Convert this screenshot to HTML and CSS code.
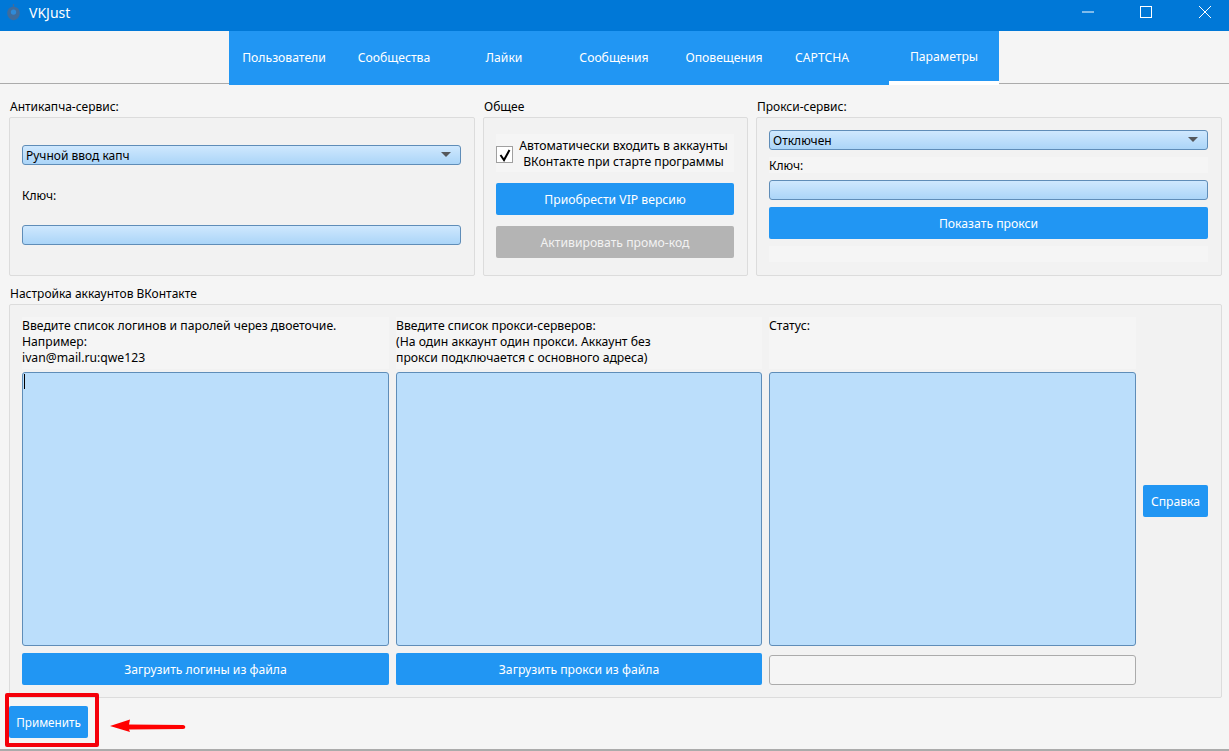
FILE: index.html
```html
<!DOCTYPE html>
<html lang="ru">
<head>
    <meta charset="UTF-8">
    <title>VKJust</title>
    <link rel="stylesheet" href="styles.css">
</head>
<body>
<div class="window">
    <div class="titlebar">
        <div class="app">
            <svg class="app-icon" width="15" height="18" viewBox="0 0 16 20">
                <path d="M8 0v3M3 5l2 1M13 5l-2 1" stroke="#3f6c9c" stroke-width="1.5"/>
                <path d="M8 3c4 0 7 3 7 7s-3 8-7 8-7-4-7-8 3-7 7-7z" fill="#3f6c9c"/>
                <circle cx="8" cy="9" r="3" fill="#2f8ad8"/>
            </svg>
            <span>VKJust</span>
        </div>
        <div class="win-btns">
            <svg class="win-min" width="14" height="14" viewBox="0 0 14 14"><path d="M1 7h12" stroke="#fff" fill="none"/></svg>
            <svg width="14" height="14" viewBox="0 0 14 14"><rect x="1.500" y="1.500" width="11" height="11" stroke="#fff" fill="none"/></svg>
            <svg width="14" height="14" viewBox="0 0 14 14"><path d="M1 1l12 12M13 1L1 13" stroke="#fff" fill="none"/></svg>
        </div>
    </div>

    <div class="tabbar">
        <ul class="tabs">
            <li>Пользователи</li>
            <li>Сообщества</li>
            <li>Лайки</li>
            <li>Сообщения</li>
            <li>Оповещения</li>
            <li class="shift">CAPTCHA</li>
            <li class="active">Параметры</li>
        </ul>
    </div>

    <div class="content">
        <div class="top-row">
            <section class="col col-a">
                <h3>Антикапча-сервис:</h3>
                <div class="group group-a">
                    <div class="select"><span>Ручной ввод капч</span><i class="arrow"></i></div>
                    <div class="lbl">Ключ:</div>
                    <div class="field"></div>
                </div>
            </section>
            <section class="col col-b">
                <h3>Общее</h3>
                <div class="group group-b">
                    <div class="check-row">
                        <div class="check">
                            <svg width="15" height="15" viewBox="0 0 15 15"><path d="M3.500 8l3.500 5 5.500-10" stroke="#000" stroke-width="2" fill="none"/></svg>
                        </div>
                        <div class="check-text">Автоматически входить в аккаунты<br>ВКонтакте при старте программы</div>
                    </div>
                    <div class="btn">Приобрести VIP версию</div>
                    <div class="btn btn-off">Активировать промо-код</div>
                </div>
            </section>
            <section class="col col-c">
                <h3>Прокси-сервис:</h3>
                <div class="group group-c">
                    <div class="select"><span>Отключен</span><i class="arrow"></i></div>
                    <div class="lbl lbl-wide">Ключ:</div>
                    <div class="field"></div>
                    <div class="btn">Показать прокси</div>
                    <div class="strip"></div>
                </div>
            </section>
        </div>

        <h3 class="big-title">Настройка аккаунтов ВКонтакте</h3>
        <div class="group group-big">
            <div class="note">Введите список логинов и паролей через двоеточие.<br>Например:<br>ivan@mail.ru:qwe123</div>
            <div class="note">Введите список прокси-серверов:<br>(На один аккаунт один прокси. Аккаунт без<br>прокси подключается с основного адреса)</div>
            <div class="note">Статус:</div>
            <div class="side"><div class="btn btn-help">Справка</div></div>
            <div class="area"><i class="caret"></i></div>
            <div class="area"></div>
            <div class="area"></div>
            <div class="btn">Загрузить логины из файла</div>
            <div class="btn">Загрузить прокси из файла</div>
            <div class="blank"></div>
        </div>

        <div class="footer">
            <div class="btn btn-apply">Применить</div>
        </div>
    </div>

    <div class="mark"></div>
    <svg class="pointer" width="80" height="20" viewBox="0 0 80 20">
        <path d="M1 10L21 3.500L20 8.500L74 9C77 9 77 13 74 13L20 13.500L21 16z" fill="#f00"/>
    </svg>
</div>
</body>
</html>
```

FILE: styles.css
```css
*{
    margin: 0;
    padding: 0;
    box-sizing: border-box;
    list-style: none;
}
body{
    background-color: #f5f5f5;
    font-family: "Noto Sans", "Open Sans", sans-serif;
    font-size: 12px;
    color: #000;
}
.window{
    position: relative;
    width: 1229px;
    height: 751px;
    overflow: hidden;
    border-bottom: 2px solid #ababab;
}

/* title */
.titlebar{
    height: 31px;
    background-color: #0078d7;
    color: #fff;
    display: flex;
    justify-content: space-between;
    align-items: center;
}
.app{
    display: flex;
    align-items: center;
    gap: 8px;
    padding-left: 6px;
    padding-bottom: 7px;
    font-size: 14px;
}
.app-icon{
    margin-top: 2px;
}
.win-btns{
    display: flex;
    gap: 45px;
    padding-right: 17px;
    padding-bottom: 7px;
}
.win-min{
    margin-right: -1px;
}

/* tabs */
.tabbar{
    height: 54px;
    display: flex;
    justify-content: center;
    padding-right: 1px;
    border-bottom: 1px solid transparent;
    background: linear-gradient(#f5f5f5 52px, #ababab 52px, #ababab 53px, #fff 53px);
}
.tabs{
    display: flex;
}
.tabs li{
    width: 110px;
    height: 54px;
    padding-bottom: 2px;
    background-color: #2196f3;
    color: #fff;
    font-size: 12.200px;
    display: flex;
    align-items: center;
    justify-content: center;
}
.tabs .shift{
    padding-right: 24px;
}
.tabs .active{
    border-bottom: 4px solid #fff;
    padding-bottom: 0;
}

/* content */
.content{
    padding: 0 7px 0 9px;
}
h3{
    font-weight: normal;
    font-size: 12px;
    line-height: 16px;
    height: 16px;
}
.top-row{
    display: flex;
    gap: 8px;
    padding-top: 14px;
}
.col-a{
    width: 466px;
}
.col-b{
    width: 265px;
}
.col-c{
    width: 466px;
}
.col h3{
    margin-bottom: 2px;
    padding-left: 1px;
}
.group{
    background-color: #f2f2f2;
    border: 1px solid #dcdcdc;
    border-radius: 2px;
}
.group-a, .group-b, .group-c{
    height: 159px;
    padding-left: 12px;
    padding-right: 13px;
}
.group-a{
    padding-top: 27px;
}
.group-b{
    padding-top: 16px;
}
.group-c{
    padding-top: 12px;
}

.select, .field{
    height: 20px;
    border: 1px solid #5f8db8;
    border-radius: 3px;
    background: linear-gradient(#cfe8fe, #abd5f8);
}
.select{
    display: flex;
    justify-content: space-between;
    align-items: center;
    padding: 0 9px 0 3px;
}
.arrow{
    width: 0;
    height: 0;
    border-left: 5px solid transparent;
    border-right: 5px solid transparent;
    border-top: 5px solid #55585c;
    margin-bottom: 2px;
}
.lbl{
    height: 16px;
    line-height: 16px;
    padding-top: 1px;
    margin: 22px 0 22px;
}
.lbl-wide{
    background-color: #f5f5f5;
    margin: 7px 0;
}

.check-row{
    height: 38px;
    background-color: #f5f5f5;
    display: flex;
    align-items: center;
    margin-bottom: 11px;
}
.check{
    width: 17px;
    height: 17px;
    background-color: #fff;
    border: 1px solid #a0a0a0;
    flex-shrink: 0;
    margin-top: 2px;
}
.check svg{
    display: block;
}
.check-text{
    flex: 1;
    text-align: center;
    line-height: 16px;
    padding-top: 2px;
    font-size: 12.200px;
}

.btn{
    height: 32px;
    background-color: #2196f3;
    border-radius: 2px;
    color: #fff;
    font-size: 12.200px;
    display: flex;
    align-items: center;
    justify-content: center;
}
.btn-off{
    background-color: #b4b4b4;
    color: #f2f2f2;
    margin-top: 11px;
}
.group-c .btn{
    margin-top: 7px;
}
.strip{
    height: 16px;
    margin-top: 7px;
    background-color: #f5f5f5;
}

.big-title{
    margin-top: 10px;
    margin-bottom: 2px;
    padding-left: 1px;
}
.group-big{
    height: 394px;
    padding: 12px 13px 12px 12px;
    display: grid;
    grid-template-columns: 367px 366px 367px 65px;
    grid-template-rows: 52px 274px 32px;
    column-gap: 7px;
}
.note{
    background-color: #f5f5f5;
    line-height: 16px;
    height: 52px;
    padding-top: 1px;
    font-size: 12.200px;
}
.side{
    grid-row: 1 / 4;
    grid-column: 4;
    padding-top: 168px;
}
.area{
    height: 274px;
    margin-top: 3px;
    border: 1px solid #5f8db8;
    border-radius: 3px;
    background-color: #bbdefb;
}
.group-big .btn{
    margin-top: 10px;
}
.group-big .btn-help{
    margin-top: 0;
}
.caret{
    display: block;
    width: 1px;
    height: 15px;
    margin: 1px 0 0 1px;
    background-color: #000;
}
.blank{
    height: 30px;
    margin-top: 12px;
    background-color: #f5f5f5;
    border: 1px solid #ababab;
    border-radius: 3px;
}
.footer{
    padding-top: 8px;
}
.btn-apply{
    width: 79px;
    font-size: 11.700px;
}

/* annotation over the screenshot */
.mark{
    position: absolute;
    left: 5px;
    top: 693px;
    width: 94px;
    height: 54px;
    border: 4px solid #f5000a;
    border-radius: 2px;
}
.pointer{
    position: absolute;
    left: 109px;
    top: 716px;
}
```
